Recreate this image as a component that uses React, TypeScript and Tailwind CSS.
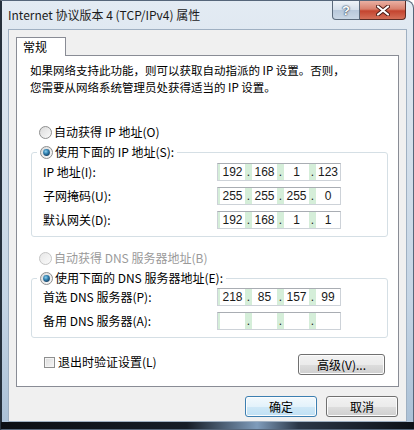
import { Fragment } from "react";

const cjk = "font-['Noto_Sans_CJK_SC','Noto_Sans',sans-serif]";

function Radio({ checked, disabled, id }: { checked?: boolean; disabled?: boolean; id: string }) {
  return (
    <svg width="13" height="13" viewBox="0 0 13 13" className="shrink-0">
      <defs>
        <linearGradient id={`rb-${id}`} x1="0" y1="0" x2="1" y2="1">
          <stop offset="0" stopColor={disabled ? "#e6e6e6" : "#d9d9d9"} />
          <stop offset="1" stopColor="#fbfbfb" />
        </linearGradient>
        <radialGradient id={`rd-${id}`} cx="0.4" cy="0.35" r="0.7">
          <stop offset="0" stopColor="#8fd0ee" />
          <stop offset="0.5" stopColor="#2f7fae" />
          <stop offset="1" stopColor="#173d5e" />
        </radialGradient>
      </defs>
      <circle cx="6.5" cy="6.5" r="6" fill={`url(#rb-${id})`} stroke={disabled ? "#c4c4c4" : "#8e8f8f"} />
      {checked && <circle cx="6.5" cy="6.5" r="3.4" fill={`url(#rd-${id})`} />}
    </svg>
  );
}

function IpBox({ parts }: { parts: string[] }) {
  return (
    <div className="flex h-[18px] w-[124px] shrink-0 border border-[#cdd2d8] border-t-[#a9adb3] bg-[#d5eed9] pl-[2px] font-['Liberation_Sans',sans-serif] text-[12px] leading-[16px] text-[#1a1a1a]">
      {parts.map((p, i) => (
        <Fragment key={i}>
          {i > 0 && <span className="w-[7px] text-center">.</span>}
          <span className={`${i === 3 ? "flex-1" : "w-[25px]"} bg-white text-center`}>{p}</span>
        </Fragment>
      ))}
    </div>
  );
}

function Row({ label, parts }: { label: string; parts: string[] }) {
  return (
    <div className="flex h-[18px] items-center">
      <span className="w-[185px] pl-[11px]">{label}</span>
      <IpBox parts={parts} />
    </div>
  );
}

function Button({ children, primary, className }: { children: React.ReactNode; primary?: boolean; className?: string }) {
  return (
    <div
      className={`flex h-[21px] items-center justify-center rounded-[3px] border shadow-[inset_0_0_0_1px_#fcfcfc] ${
        primary
          ? "border-[#3c7fb1] bg-[linear-gradient(180deg,#f2f9fd_0%,#e3f2fb_50%,#cfe8f7_51%,#bfe0f4_100%)]"
          : "border-[#707070] bg-[linear-gradient(180deg,#f2f2f2_0%,#ebebeb_50%,#dddddd_51%,#cfcfcf_100%)]"
      } ${className ?? ""}`}
    >
      {children}
    </div>
  );
}

export default function App() {
  return (
    <div className="h-[430px] w-[414px] overflow-hidden bg-white">
      <div
        className={`flex h-[430px] w-[414px] flex-col rounded-tr-[8px] border border-[#56667a] border-l-[2px] border-l-[#26313d] bg-[linear-gradient(180deg,#e3ebf3_0%,#d6e1ec_30%,#c5d5e5_70%,#aac0d6_100%)] ${cjk} text-[12px] text-black`}
      >
        {/* title bar */}
        <div className="flex h-[28px] shrink-0 items-start">
          <span className="pl-[6px] pt-[5px] text-[12px] leading-[18px] text-[#1b1b1b]">
            Internet 协议版本 4 (TCP/IPv4) 属性
          </span>
          <div className="ml-auto mr-[7px] flex">
            <div className="flex h-[19px] w-[28px] items-center justify-center rounded-bl-[4px] border border-t-0 border-[#5b6a7b] bg-[linear-gradient(180deg,#eef3f8_0%,#d5dfea_50%,#b8c8da_51%,#cad7e5_100%)] font-['Liberation_Sans',sans-serif] text-[13px] font-bold leading-none text-white [text-shadow:0_0_2px_#1f3550,0_0_1px_#1f3550]">
              ?
            </div>
            <div className="flex h-[19px] w-[46px] items-center justify-center rounded-br-[4px] border border-l-0 border-t-0 border-[#5c2b24] bg-[linear-gradient(180deg,#eab0a3_0%,#d8806d_45%,#c4442f_55%,#d46f58_100%)]">
              <svg width="14" height="11" viewBox="0 0 14 11">
                <path d="M2 1.5 L12 9.5 M12 1.5 L2 9.5" stroke="#4a1a14" strokeWidth="4" strokeLinecap="round" />
                <path d="M2 1.5 L12 9.5 M12 1.5 L2 9.5" stroke="#ffffff" strokeWidth="2.2" strokeLinecap="round" />
              </svg>
            </div>
          </div>
        </div>

        {/* client area */}
        <div className="mx-[6px] flex h-[393px] shrink-0 flex-col border border-[#9fb0c2] bg-[#f0f0f0]">
          <div className="relative z-10 -mb-px ml-[7px] mt-[7px] flex h-[19px] w-[50px] items-center border border-b-0 border-[#898c95] bg-white pl-[6px]">
            常规
          </div>
          <div className="ml-[7px] flex h-[332px] w-[383px] flex-col border border-[#898c95] bg-white">
            <p className="ml-[13px] mt-[6px] text-[11.5px] leading-[17px]">
              如果网络支持此功能，则可以获取自动指派的 IP 设置。否则，
              <br />
              您需要从网络系统管理员处获得适当的 IP 设置。
            </p>

            <div className="ml-[22px] mt-[26px] flex h-[20px] items-center gap-[2px]">
              <Radio id="a" />
              <span>自动获得 IP 地址(O)</span>
            </div>

            <fieldset className="ml-[14px] w-[357px] rounded-[3px] border border-[#d5dfe5] pb-[7px]">
              <legend className="ml-[5px] flex h-[20px] items-center gap-[2px] px-[3px]">
                <Radio id="b" checked />
                <span>使用下面的 IP 地址(S):</span>
              </legend>
              <div className="mt-px flex flex-col gap-[6px]">
                <Row label="IP 地址(I):" parts={["192", "168", "1", "123"]} />
                <Row label="子网掩码(U):" parts={["255", "255", "255", "0"]} />
                <Row label="默认网关(D):" parts={["192", "168", "1", "1"]} />
              </div>
            </fieldset>

            <div className="ml-[22px] mt-[11px] flex h-[20px] items-center gap-[2px] text-[#9a9a9a]">
              <Radio id="c" disabled />
              <span>自动获得 DNS 服务器地址(B)</span>
            </div>

            <fieldset className="ml-[14px] w-[357px] rounded-[3px] border border-[#d5dfe5] pb-[7px]">
              <legend className="ml-[5px] flex h-[20px] items-center gap-[2px] px-[3px]">
                <Radio id="d" checked />
                <span>使用下面的 DNS 服务器地址(E):</span>
              </legend>
              <div className="flex flex-col gap-[6px]">
                <Row label="首选 DNS 服务器(P):" parts={["218", "85", "157", "99"]} />
                <Row label="备用 DNS 服务器(A):" parts={["", "", "", ""]} />
              </div>
            </fieldset>

            <div className="mr-[13px] mt-[16px] flex items-start justify-between">
              <div className="-mt-[2px] ml-[27px] flex h-[20px] items-center gap-[3px]">
                <div className="h-[11px] w-[11px] border border-[#8e8f8f] bg-[linear-gradient(135deg,#dcdcdc_0%,#f6f6f6_100%)] shadow-[inset_0_0_0_1px_#f4f4f4]" />
                <span>退出时验证设置(L)</span>
              </div>
              <Button className="w-[87px]">高级(V)...</Button>
            </div>
          </div>

          <div className="mr-[8px] mt-[9px] flex justify-end gap-[9px]">
            <Button primary className="w-[72px]">
              确定
            </Button>
            <Button className="w-[72px]">取消</Button>
          </div>
        </div>

        {/* bottom frame */}
        <div className="-mx-px flex-1 bg-[linear-gradient(90deg,#0b0e13_0%,#161d27_45%,#7f9cbb_62%,#2a3646_72%,#0d1117_100%)]" />
      </div>
    </div>
  );
}
